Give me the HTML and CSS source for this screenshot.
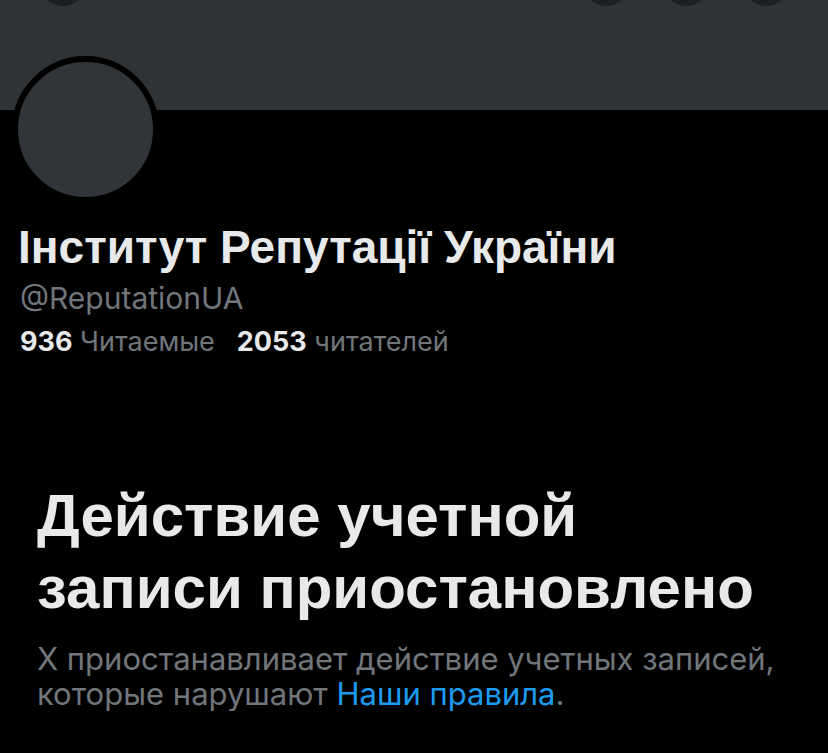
FILE: index.html
```html
<!DOCTYPE html>
<html lang="ru">
<head>
<meta charset="utf-8">
<title>Інститут Репутації України</title>
<link rel="stylesheet" href="styles.css">
</head>
<body>
<div class="banner">
  <div class="topbar">
    <span class="btn"></span>
    <div class="btn-group">
      <span class="btn"></span>
      <span class="btn"></span>
      <span class="btn"></span>
    </div>
  </div>
</div>
<div class="profile">
  <div class="avatar"></div>
  <h1 class="name">Інститут Репутації України</h1>
  <div class="handle">@ReputationUA</div>
  <div class="stats">
    <span class="stat"><b>936</b> Читаемые</span>
    <span class="stat"><b>2053</b> читателей</span>
  </div>
</div>
<div class="notice">
  <h2 class="notice-title">Действие учетной записи приостановлено</h2>
  <p class="notice-text">X приостанавливает действие учетных записей, которые нарушают <a href="#" class="link">Наши правила</a>.</p>
</div>
</body>
</html>
```
FILE: styles.css
```css
html, body {
  margin: 0;
  padding: 0;
  background: #000;
}
body {
  font-family: "Inter", "Roboto", sans-serif;
  color: #e7e9ea;
  overflow: hidden;
}
.banner {
  height: 110px;
  background: #2f3336;
}
.topbar {
  display: flex;
  justify-content: space-between;
  padding: 0 39px 0 40px;
  transform: translateY(-40px);
}
.btn-group {
  display: flex;
  gap: 34px;
}
.btn {
  display: block;
  width: 46px;
  height: 46px;
  border-radius: 50%;
  background: #1c1e21;
}
.profile {
  padding: 0 18px;
}
.avatar {
  width: 135px;
  height: 135px;
  border: 6px solid #000;
  border-radius: 50%;
  background: #313438;
  margin: -54px 0 0 -6px;
}
.name {
  margin: 17px 0 0;
  font-family: "Liberation Sans", Arial, sans-serif;
  font-weight: 700;
  font-size: 46px;
  line-height: 54px;
  color: #e7e9ea;
  white-space: nowrap;
}
.handle {
  margin-top: 6px;
  font-size: 30px;
  line-height: 36px;
  color: #71767b;
  padding-left: 2px;
}
.stats {
  margin-top: 10px;
  display: flex;
  gap: 22px;
  font-size: 27px;
  line-height: 32px;
  color: #71767b;
  padding-left: 2px;
}
.stat b {
  color: #e7e9ea;
  font-weight: 700;
}
.notice {
  padding: 0 37px;
  margin-top: 122px;
}
.notice-title {
  margin: 0;
  max-width: 730px;
  font-family: "Liberation Sans", Arial, sans-serif;
  font-weight: 700;
  font-size: 60px;
  line-height: 72px;
  color: #e7e9ea;
}
.notice-text {
  margin: 17px 0 0;
  font-size: 31px;
  line-height: 35px;
  color: #71767b;
}
.link {
  color: #1d9bf0;
  text-decoration: none;
}
```
